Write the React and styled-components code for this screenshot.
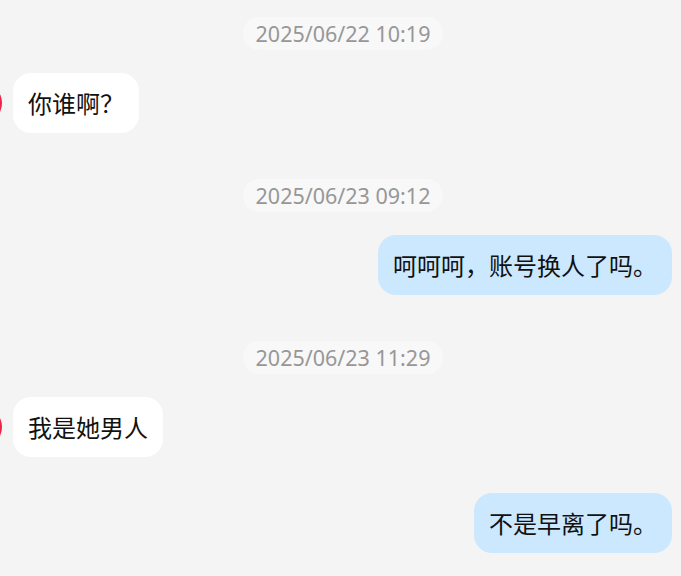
import React from 'react';
import styled, { createGlobalStyle } from 'styled-components';

const GlobalStyle = createGlobalStyle`
  html, body {
    margin: 0;
    padding: 0;
    background: #f4f4f4;
    overflow: hidden;
  }
  body {
    font-family: "Noto Sans", "Noto Sans CJK SC", sans-serif;
  }
`;

const ChatList = styled.div`
  display: flex;
  flex-direction: column;
  padding: 17px 0 0;
  min-height: 576px;
  box-sizing: border-box;
`;

const TimeRow = styled.div`
  display: flex;
  justify-content: center;
  padding-left: 5px;
  margin-top: ${props => (props.$first ? '0' : '46px')};
  margin-bottom: 23px;
`;

const TimePill = styled.span`
  display: inline-block;
  height: 33px;
  line-height: 33px;
  padding: 0 13px;
  border-radius: 17px;
  background: #f8f8f8;
  color: #979797;
  font-family: "Noto Sans", sans-serif;
  font-size: 21.5px;
  white-space: nowrap;
`;

const MsgRow = styled.div`
  display: flex;
  align-items: center;
  justify-content: ${props => (props.$mine ? 'flex-end' : 'flex-start')};
  gap: 11px;
  padding-right: ${props => (props.$mine ? '9px' : '0')};
  margin-top: ${props => (props.$follow ? '36px' : '0')};
`;

const Avatar = styled.div`
  flex: none;
  width: 40px;
  height: 40px;
  margin-left: -38px;
  border-radius: 50%;
  background: radial-gradient(circle at 70% 50%, #f5264a 0%, #e81f45 60%, #c41838 100%);
`;

const Bubble = styled.div`
  padding: 13px 15px;
  line-height: 34px;
  font-size: 24px;
  font-family: "Noto Sans CJK SC", "Noto Sans", sans-serif;
  color: #111111;
  border-radius: 18px;
  background: ${props => (props.$mine ? '#cce8fe' : '#ffffff')};
  white-space: nowrap;
`;

const messages = [
  { type: 'time', text: '2025/06/22 10:19' },
  { type: 'msg', mine: false, text: '你谁啊？' },
  { type: 'time', text: '2025/06/23 09:12' },
  { type: 'msg', mine: true, text: '呵呵呵，账号换人了吗。' },
  { type: 'time', text: '2025/06/23 11:29' },
  { type: 'msg', mine: false, text: '我是她男人' },
  { type: 'msg', mine: true, text: '不是早离了吗。' },
];

export default function App() {
  return (
    <>
      <GlobalStyle />
      <ChatList>
        {messages.map((m, i) => {
          if (m.type === 'time') {
            return (
              <TimeRow key={i} $first={i === 0}>
                <TimePill>{m.text}</TimePill>
              </TimeRow>
            );
          }
          const follow = i > 0 && messages[i - 1].type === 'msg';
          return (
            <MsgRow key={i} $mine={m.mine} $follow={follow}>
              {!m.mine && <Avatar />}
              <Bubble $mine={m.mine}>{m.text}</Bubble>
            </MsgRow>
          );
        })}
      </ChatList>
    </>
  );
}
